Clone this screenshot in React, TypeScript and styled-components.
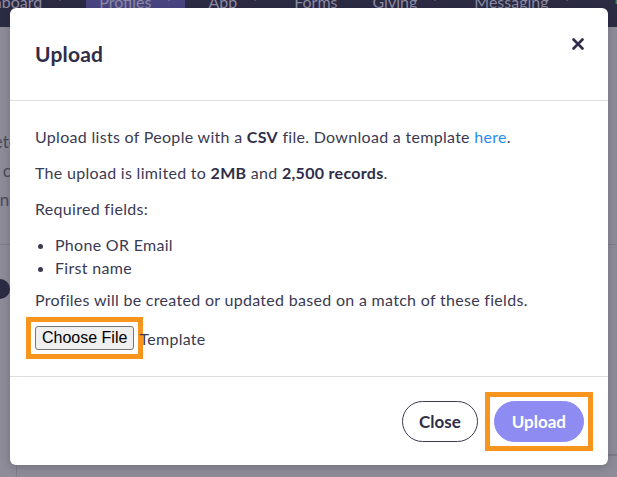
import React from 'react';
import styled, { createGlobalStyle } from 'styled-components';

const GlobalStyle = createGlobalStyle`
	* { box-sizing: border-box; }
	html, body { margin: 0; padding: 0; }
	body {
		width: 617px;
		height: 477px;
		overflow: hidden;
		background: #8d8c98;
		font-family: Lato, "Noto Sans", sans-serif;
	}
`;

const navItems = [
	{ label: 'Dashboard', menu: true },
	{ label: 'Profiles', menu: true, active: true },
	{ label: 'App', menu: true },
	{ label: 'Forms', menu: false },
	{ label: 'Giving', menu: true },
	{ label: 'Messaging', menu: true }
];

function Caret() {
	return (
		<svg width='8' height='5' viewBox='0 0 8 5'>
			<path d='M0 0h8L4 5z' fill='currentColor' />
		</svg>
	);
}

function CloseIcon() {
	return (
		<svg width='12' height='12' viewBox='0 0 12 12'>
			<path
				d='M1.5 1.5l9 9M10.5 1.5l-9 9'
				stroke='#2f2d47'
				strokeWidth='2.6'
				strokeLinecap='round'
			/>
		</svg>
	);
}

function App() {
	return (
		<>
			<GlobalStyle />
			<Page>
				<NavBar>
					{navItems.map(item => (
						<NavItem key={item.label} $active={item.active}>
							{item.label}
							{item.menu && <Caret />}
						</NavItem>
					))}
					<NewTag>New</NewTag>
				</NavBar>
				<Backdrop>
					<BackLine>Delete</BackLine>
					<BackLine>Add c</BackLine>
					<BackLine>Learn</BackLine>
					<BackRule />
					<BackAvatar />
					<BackCard />
				</Backdrop>
			</Page>

			<Modal>
				<Header>
					<Title>Upload</Title>
					<CloseButton aria-label='Close'>
						<CloseIcon />
					</CloseButton>
				</Header>
				<Body>
					<Para>
						Upload lists of People with a <b>CSV</b> file. Download a template{' '}
						<LinkText href='#'>here</LinkText>.
					</Para>
					<Para>
						The upload is limited to <b>2MB</b> and <b>2,500 records</b>.
					</Para>
					<Para>Required fields:</Para>
					<FieldList>
						<li>Phone OR Email</li>
						<li>First name</li>
					</FieldList>
					<Para>Profiles will be created or updated based on a match of these fields.</Para>
					<FileRow>
						<Highlight $offset={4}>
							<FileButton type='button'>Choose File</FileButton>
						</Highlight>
						<FileLabel>Template</FileLabel>
					</FileRow>
				</Body>
				<Footer>
					<PillButton type='button'>Close</PillButton>
					<Highlight $offset={4}>
						<PillButton type='button' $primary>Upload</PillButton>
					</Highlight>
				</Footer>
			</Modal>
		</>
	);
}

const Page = styled.div`
	position: relative;
	height: 477px;
`;

const NavBar = styled.nav`
	display: flex;
	align-items: flex-start;
	height: 27px;
	background: #2c2b44;
	overflow: hidden;
`;

const NavItem = styled.div<{ $active?: boolean }>`
	display: flex;
	align-items: center;
	gap: 14px;
	height: 27px;
	margin: -16px 10px 0 0;
	padding: 8px 12px 0 13px;
	font-size: 16px;
	line-height: 1;
	color: #8e8da3;
	background: ${props => props.$active ? '#4a4682' : 'transparent'};
	white-space: nowrap;

	&:first-child {
		margin-left: -34px;
		padding-left: 0;
	}

	svg { margin-top: -6px; }
`;

const NewTag = styled.span`
	margin: -16px 0 0 22px;
	padding-top: 8px;
	font-size: 14px;
	font-weight: 700;
	line-height: 1;
	color: #3e8a6a;
`;

const Backdrop = styled.div`
	padding-top: 100px;
	color: #4b4a5c;
	font-size: 17px;
`;

const BackLine = styled.div`
	margin-left: -32px;
	line-height: 29px;
`;

const BackRule = styled.div`
	margin-top: 30px;
	border-top: 1px solid #7f7e8b;
`;

const BackAvatar = styled.div`
	width: 20px;
	height: 20px;
	margin: 34px 0 0 -10px;
	border-radius: 50%;
	background: #2c2b44;
`;

const BackCard = styled.div`
	margin: 155px 0 0 16px;
	height: 30px;
	border-left: 1px solid #7d7c89;
	box-shadow: inset 25px 0 0 #8d8c98, inset 0 2px 0 #7d7c89;
`;

const Modal = styled.div`
	position: absolute;
	top: 8px;
	left: 10px;
	width: 598px;
	height: 457px;
	display: flex;
	flex-direction: column;
	background: #ffffff;
	border-radius: 6px;
	box-shadow: 0 2px 10px rgba(30, 28, 50, 0.25);
	color: #3b3a52;
`;

const Header = styled.div`
	display: flex;
	justify-content: space-between;
	align-items: flex-start;
	height: 93px;
	padding: 32px 20px 0 25px;
	border-bottom: 1px solid #dedde4;
`;

const Title = styled.h2`
	margin: 0;
	font-size: 21px;
	line-height: 28px;
	font-weight: 700;
	letter-spacing: 0.2px;
	color: #2f2d47;
`;

const CloseButton = styled.button`
	display: flex;
	align-items: center;
	justify-content: center;
	width: 20px;
	height: 20px;
	margin-top: -6px;
	padding: 0;
	border: none;
	background: none;
`;

const Body = styled.div`
	flex: 1;
	padding: 24px 25px 0;
	border-bottom: 1px solid #dedde4;
	font-size: 16px;
	letter-spacing: 0.3px;
`;

const Para = styled.p`
	margin: 0 0 12px;
	line-height: 24px;

	b { font-weight: 700; color: #2f2d47; }
`;

const LinkText = styled.a`
	color: #2a8cf0;
	text-decoration: none;
`;

const FieldList = styled.ul`
	margin: 0 0 9px;
	padding-left: 20px;

	li {
		line-height: 23px;
	}
`;

const FileRow = styled.div`
	display: flex;
	align-items: center;
	gap: 5px;
	margin-top: 14px;
`;

const Highlight = styled.span<{ $offset: number }>`
	display: inline-flex;
	outline: 5px solid #f8951f;
	outline-offset: ${props => props.$offset}px;
`;

const FileButton = styled.button`
	height: 24px;
	padding: 0 6px;
	border: 1px solid #767676;
	border-radius: 3px;
	background: #efefef;
	font-family: "Liberation Sans", Arial, sans-serif;
	font-size: 16px;
	letter-spacing: 0;
	color: #000000;
`;

const FileLabel = styled.span`
	font-size: 16px;
	color: #3b3a52;
`;

const Footer = styled.div`
	display: flex;
	justify-content: flex-end;
	align-items: flex-start;
	gap: 16px;
	height: 88px;
	padding: 24px 24px 0;
`;

const PillButton = styled.button<{ $primary?: boolean }>`
	height: 41px;
	padding: 0 ${props => props.$primary ? '17px' : '16px'};
	border: 1px solid ${props => props.$primary ? '#8e8cf3' : '#3a3952'};
	border-radius: 21px;
	background: ${props => props.$primary ? '#8e8cf3' : '#ffffff'};
	color: ${props => props.$primary ? '#ffffff' : '#2f2d47'};
	font-family: Lato, "Noto Sans", sans-serif;
	font-size: 17px;
	font-weight: 700;
`;

export default App;
